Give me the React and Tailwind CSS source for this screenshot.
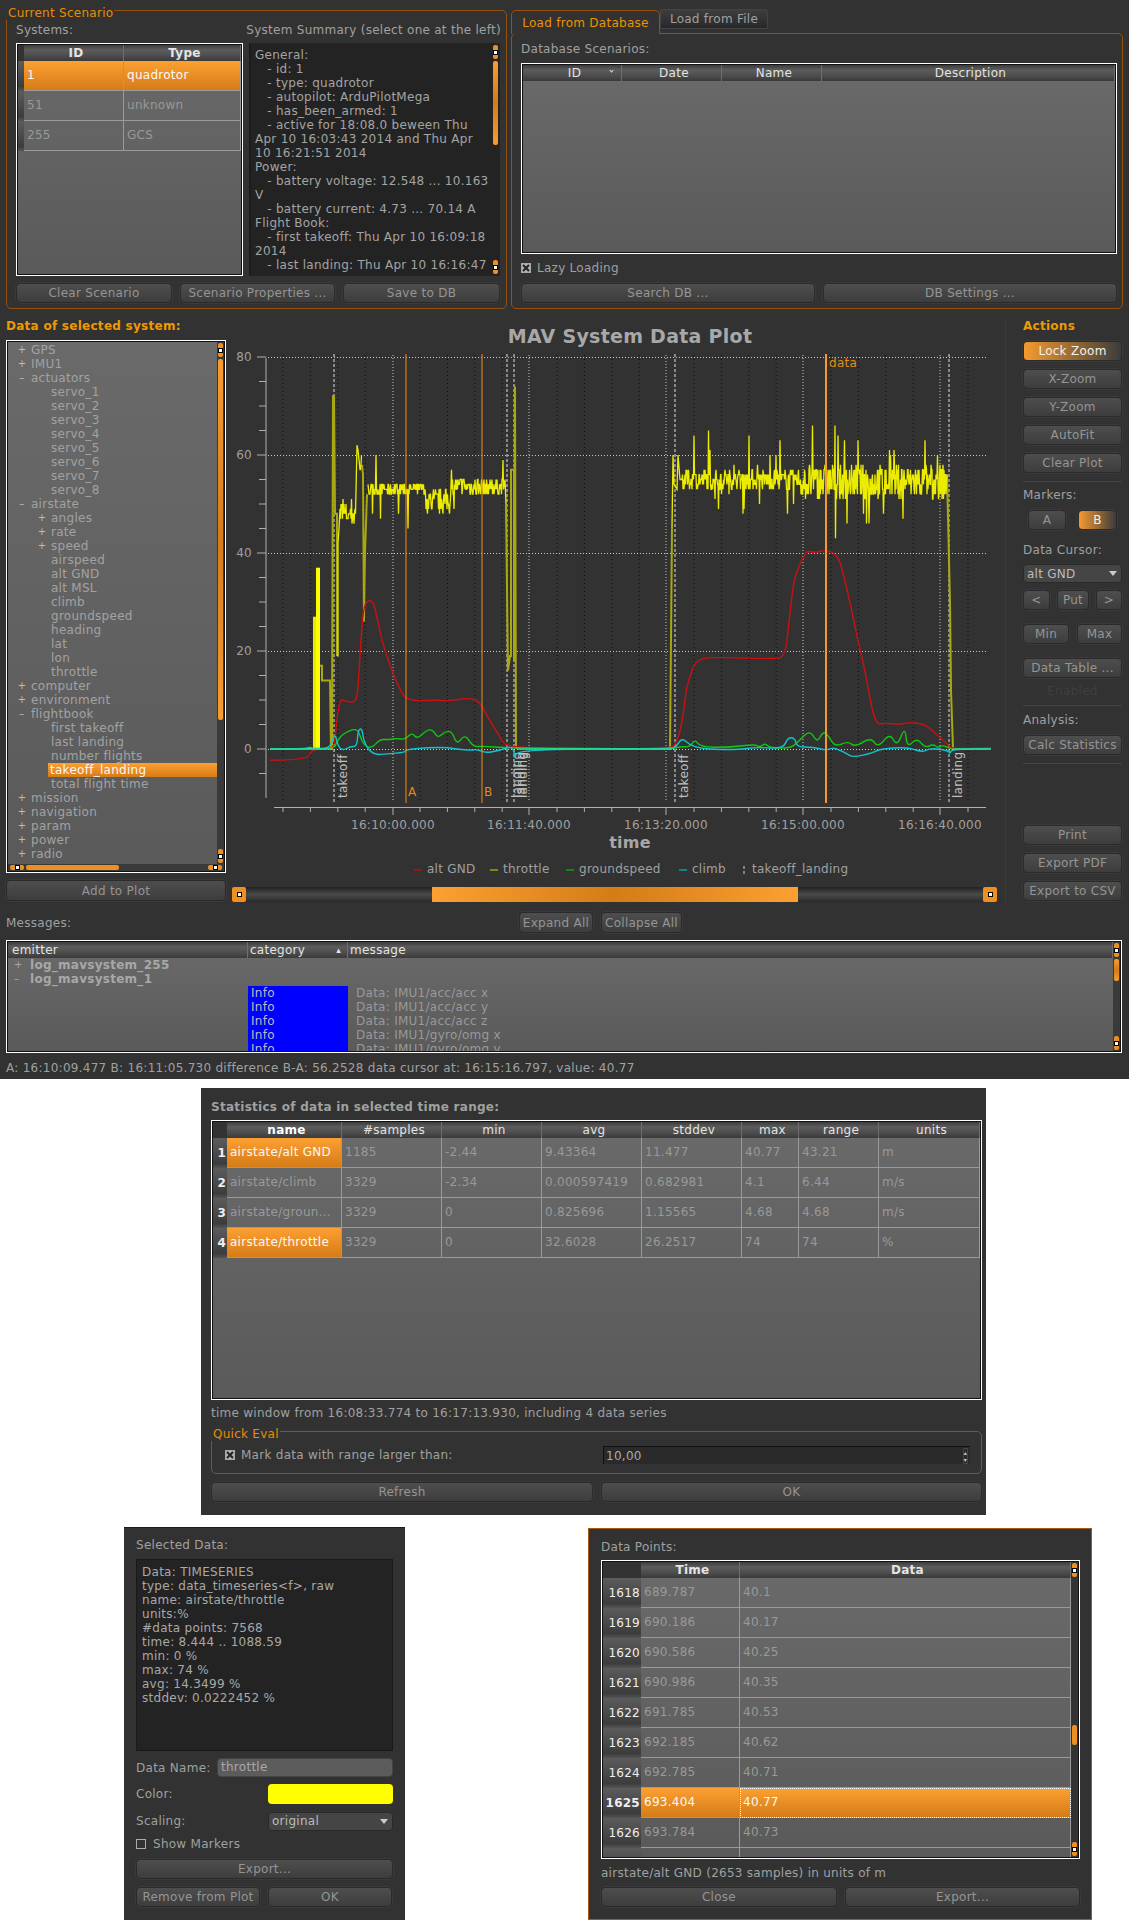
import React from 'react';

let seed = 7;
const rnd = () => {
  seed = (seed * 16807) % 2147483647;
  return seed / 2147483647;
};
const yv = (v) => 749 - 4.9 * v;
const pts = (list) => list.map(([x, v]) => `${x},${yv(v)}`).join(' ');

// rounds the corners of a hand-read curve
function smooth(list) {
  let d = `M${list[0][0]} ${yv(list[0][1])}`;
  for (let i = 1; i < list.length - 1; i++) {
    const [x, v] = list[i];
    const [nx, nv] = list[i + 1];
    d += ` Q${x} ${yv(v)} ${(x + nx) / 2} ${(yv(v) + yv(nv)) / 2}`;
  }
  const last = list[list.length - 1];
  return `${d} L${last[0]} ${yv(last[1])}`;
}

function noisy(x0, x1, base, amp, spikeP, spikeAmp) {
  const out = [];
  for (let x = x0; x < x1; x += 0.5) {
    let v = base + (rnd() - 0.5) * 2 * amp;
    if (rnd() < spikeP) v += (rnd() - 0.5) * 2 * spikeAmp;
    out.push([x, Math.round(v)]);
  }
  return out;
}

const throttleA = [[337, 19], [338, 19], [338, 42], ...noisy(339, 356, 48, 3, 0.1, 5), [357, 62], [358, 61], ...noisy(359, 362, 58, 2, 0, 0)];
const throttleB = [...noisy(368, 425, 53, 1.5, 0.06, 8), ...noisy(425, 452, 50.5, 2.5, 0.05, 8), ...noisy(452, 504, 53.5, 1.8, 0.05, 7), [505, 55], [506, 50]];
const throttleC = [[672, 45], [673, 60], [674, 54], [677, 53], [678, 60], [680, 55], ...noisy(682, 800, 55, 2, 0.07, 9), ...noisy(800, 947, 54.5, 3.5, 0.1, 12), [947, 56]];
const olive1 = [[320, 17], [322, 17], [322, 14], [330, 14], [331, 0], [332, 0], [333, 72], [334, 72], [335, 48], [337, 48], [337, 19]];
const olive2 = [[362, 58], [363, 56], [364, 26], [365, 40], [366, 46], [367, 52]];
const olive3 = [[506, 50], [508, 16], [510, 19], [511, 19], [511, 57], [514, 57], [514, 18], [515, 74], [516, 0]];
const olive4 = [[669, 0], [670, 0], [672, 45]];
const olive5 = [[947, 56], [950, 30], [951, 12], [953, 0]];

const red = [[270, -2.3], [308, -2.3], [311, 0], [333, 0], [335, 2], [338, 8], [341, 10.3], [348, 9.5], [356, 9.7], [358, 12], [362, 26], [365, 30], [373, 30.5], [378, 26], [382, 22], [390, 17], [398, 13], [405, 10.2], [420, 9.8], [435, 10], [450, 9.8], [466, 10.4], [478, 10], [484, 8], [492, 5], [500, 2.5], [507, 0], [670, 0], [676, 1], [682, 5], [686, 12], [690, 15], [697, 18.5], [720, 18.7], [750, 18.5], [770, 18.5], [785, 18.5], [789, 26], [793, 33], [796, 36], [803, 39], [807, 40.5], [815, 40], [827, 40.7], [838, 39.5], [843, 36], [850, 30], [858, 22], [865, 16], [872, 8], [877, 5], [885, 5.3], [900, 5], [907, 5.4], [923, 5.2], [933, 3.7], [948, 0.8], [953, 0], [991, 0.3]];
const green = [[270, 0], [333, 0], [336, 1], [340, 2.5], [346, 3.4], [353, 4], [358, 3.9], [362, 1.5], [367, 0.3], [373, 0.4], [380, 2], [388, 1.9], [397, 2.2], [405, 1.9], [412, 3.4], [417, 2], [427, 3.9], [433, 3.9], [438, 2.2], [445, 3.6], [452, 3.6], [457, 0.8], [465, 3.1], [473, 0.4], [483, 0.6], [507, 0.2], [673, 0], [680, 0.5], [690, 0.4], [695, 2], [700, 0.4], [730, 0.3], [755, 1], [760, 0.3], [765, 1.2], [770, 0.2], [790, 0.2], [797, 1.2], [810, 4], [817, 1.2], [823, 3.6], [828, 2.8], [835, 0.4], [848, 1.6], [855, 0.4], [871, 2.4], [878, 0.2], [890, 3.3], [897, 0.4], [905, 4.7], [907, 0.2], [917, 2.3], [925, 0.2], [933, 1], [938, 0.2], [942, 0.8], [952, 0]];
const cyan = [[270, 0], [305, 0], [310, 0.4], [314, 0], [330, 0], [335, 3.4], [338, 0.5], [343, -0.3], [350, 0.5], [357, 0.5], [358, 3.8], [362, 4.3], [364, 1.2], [373, -1.2], [387, -1], [405, -0.7], [406, -0.1], [430, 0.3], [447, 0.3], [467, -0.3], [478, -0.1], [485, -0.8], [500, -0.3], [513, 0.7], [515, -2.2], [517, 0], [670, 0], [676, 0.4], [682, 2.3], [690, 0.8], [700, 0.2], [713, -0.1], [740, -0.1], [757, 0.4], [783, 0], [788, 2.4], [795, 2.2], [797, 0.4], [813, 0.4], [827, -0.3], [833, 0.4], [847, -1], [853, -1.7], [873, -0.8], [880, 0], [907, 0.4], [923, -0.7], [930, 0.2], [948, -0.3], [950, -1], [952, 0], [991, 0]];

const majorX = [393, 529, 666, 803, 940];
const minorX = Array.from({ length: 26 }, (_, i) => 283 + i * 27.4).filter((x) => !majorX.some((m) => Math.abs(m - x) < 6));
const yTicks = Array.from({ length: 18 }, (_, i) => 80 - i * 5);

function Plot() {
  return (
    <svg viewBox="230 319 775 566" className="block w-[775px] h-[566px]">
      {minorX.map((x) => <line key={x} x1={x} x2={x} y1="355" y2="802" stroke="#0c0c0c" strokeDasharray="1 3" />)}
      {majorX.map((x) => <line key={x} x1={x} x2={x} y1="355" y2="802" stroke="#c8c8c8" strokeDasharray="1 2" />)}
      {[80, 60, 40, 20, 0].map((v) => <line key={v} x1="268" x2="988" y1={yv(v) + 0.5} y2={yv(v) + 0.5} stroke="#c8c8c8" strokeDasharray="1 2" />)}

      <line x1="266" x2="266" y1="358" y2="798" stroke="#b0b0b0" />
      <line x1="274" x2="986" y1="807.5" y2="807.5" stroke="#b0b0b0" />
      {yTicks.map((v) => <line key={v} x1={v % 20 === 0 ? 257 : 259} x2="266" y1={yv(v)} y2={yv(v)} stroke="#b0b0b0" />)}
      {minorX.map((x) => <line key={x} x1={x} x2={x} y1="808" y2="812" stroke="#b0b0b0" />)}
      {majorX.map((x) => <line key={x} x1={x} x2={x} y1="808" y2="815" stroke="#b0b0b0" />)}

      <text x="630" y="343" textAnchor="middle" fontSize="19" fontWeight="bold" fill="#a8a8a8">MAV System Data Plot</text>
      {[80, 60, 40, 20, 0].map((v) => <text key={v} x="252" y={yv(v) + 4} textAnchor="end" fontSize="12" fill="#a0a0a0">{v}</text>)}
      {[['16:10:00.000', 393], ['16:11:40.000', 529], ['16:13:20.000', 666], ['16:15:00.000', 803], ['16:16:40.000', 940]].map(([t, x]) => (
        <text key={t} x={x} y="829" textAnchor="middle" fontSize="12" fill="#a0a0a0">{t}</text>
      ))}
      <text x="630" y="848" textAnchor="middle" fontSize="16" fontWeight="bold" fill="#a8a8a8">time</text>

      {[334, 507, 514, 675, 949].map((x) => <line key={x} x1={x} x2={x} y1="354" y2="803" stroke="#e0e0e0" strokeDasharray="3 2" />)}
      {[['takeoff', 347], ['landing', 521], ['landing', 525], ['landing', 527], ['takeoff', 688], ['landing', 962]].map(([t, x], i) => (
        <text key={i} x={x} y="798" fontSize="12" fill="#c0c0c0" transform={`rotate(-90 ${x} 798)`}>{t}</text>
      ))}

      <rect x="313" y={yv(27)} width="3" height={4.9 * 27} fill="#e8e800" />
      <rect x="316" y={yv(37)} width="4" height={4.9 * 37} fill="#ffff00" />
      <polyline points={pts(olive1)} fill="none" stroke="#a8a812" strokeWidth="2" />
      <polyline points={pts(olive2)} fill="none" stroke="#a8a812" strokeWidth="2" />
      <polyline points={pts(olive3)} fill="none" stroke="#a8a812" strokeWidth="2" />
      <polyline points={pts(olive4)} fill="none" stroke="#a8a812" strokeWidth="2" />
      <polyline points={pts(olive5)} fill="none" stroke="#a8a812" strokeWidth="2" />
      <polyline points={pts(throttleA)} fill="none" stroke="#ecec00" strokeWidth="1.3" />
      <polyline points={pts(throttleB)} fill="none" stroke="#ecec00" strokeWidth="1.3" />
      <polyline points={pts(throttleC)} fill="none" stroke="#ecec00" strokeWidth="1.3" />
      <path d={smooth(red)} fill="none" stroke="#cc1010" strokeWidth="1.4" />
      <path d={smooth(green)} fill="none" stroke="#10c810" strokeWidth="1.4" />
      <path d={smooth(cyan)} fill="none" stroke="#10c4d0" strokeWidth="1.4" />
      <line x1="270" x2="332" y1="749" y2="749" stroke="#20e090" strokeWidth="1.6" />
      <line x1="517" x2="672" y1="749" y2="749" stroke="#20e090" strokeWidth="1.6" />
      <line x1="953" x2="991" y1="749" y2="749" stroke="#20e090" strokeWidth="1.6" />

      <line x1="406" x2="406" y1="354" y2="803" stroke="#f08c10" />
      <line x1="482" x2="482" y1="354" y2="803" stroke="#f08c10" />
      <line x1="826" x2="826" y1="354" y2="803" stroke="#f59a30" strokeWidth="2" />
      <text x="408" y="796" fontSize="12" fill="#e88a10">A</text>
      <text x="484" y="796" fontSize="12" fill="#e88a10">B</text>
      <text x="829" y="367" fontSize="12" fill="#e88a10">data</text>

      {[['alt GND', 414, '#b01010'], ['throttle', 490, '#a0a010'], ['groundspeed', 566, '#10a010'], ['climb', 679, '#10a0a8']].map(([t, x, c]) => (
        <g key={t}>
          <line x1={x} x2={x + 8} y1="870" y2="870" stroke={c} strokeWidth="1.5" />
          <text x={x + 13} y="873" fontSize="12" fill="#a0a0a0">{t}</text>
        </g>
      ))}
      <line x1="744" x2="744" y1="866" y2="874" stroke="#d0d0d0" strokeDasharray="3 2" />
      <text x="752" y="873" fontSize="12" fill="#a0a0a0">takeoff_landing</text>
    </svg>
  );
}

function Btn({ children, className = '', active }) {
  return (
    <div className={`flex items-center justify-center h-[20px] rounded-[4px] border border-[#2a2a2a] shadow-[0_0_0_1px_#3a3a3a] whitespace-nowrap ${active ? 'bg-[linear-gradient(90deg,#f59a2e,#3c3c3c)] text-[#f2f2f2]' : 'bg-linear-to-b from-[#4e4e4e] to-[#3d3d3d] text-[#959595]'} ${className}`}>
      {children}
    </div>
  );
}

function Handle({ className = '' }) {
  return (
    <div className={`flex items-center justify-center shrink-0 bg-[#ee8f22] rounded-[2px] ${className}`}>
      <div className="w-[3px] h-[3px] bg-white border border-black box-content" />
    </div>
  );
}

function VScroll({ barClass, spacerClass }) {
  return (
    <div className="w-[7px] shrink-0 flex flex-col items-center bg-[#3a3a3a] py-px">
      <Handle className="w-[5px] h-[14px]" />
      <div className={`w-full flex-1 flex flex-col items-center ${spacerClass || ''}`}>
        <div className={`w-[5px] rounded-[2px] bg-linear-to-b from-[#f89c30] via-[#d57c16] to-[#f89c30] ${barClass}`} />
      </div>
      <Handle className="w-[5px] h-[14px]" />
    </div>
  );
}

function Frame({ children, className = '' }) {
  return (
    <div className={`border border-white ${className}`}>
      <div className="w-full h-full border border-[#111] bg-linear-to-b from-[#6a6a6a] to-[#5a5a5a] overflow-hidden">{children}</div>
    </div>
  );
}

const headBase = 'flex items-center h-[16px] border-r border-[#6e6e6e] bg-[linear-gradient(#3c3c3c,#5c5c5c_30%,#4e4e4e_65%,#3a3a3a)] text-[#e4e4e4]';
const headCell = `${headBase} justify-center pl-[5px]`;
const cell = 'flex items-center pl-[3px] pb-[2px] h-[30px] border-r border-b border-[#9a9a9a] text-[#999] whitespace-nowrap overflow-hidden';
const sel = 'bg-linear-to-b from-[#fca032] to-[#d67c16] text-[#f8f8f8]';
const rowHead = 'flex items-center justify-end h-[30px] bg-[linear-gradient(#5c5c5c,#3c3c3c_85%,#555)] text-[#eee]';

function Group({ title, className = '', children }) {
  return (
    <div className={`relative border border-[#93520c] rounded-[5px] ${className}`}>
      {title && <div className="absolute -left-px -top-[5px] h-[14px] leading-[14px] pl-[2px] pr-[1px] bg-[#323232] text-[#e88c00]">{title}</div>}
      {children}
    </div>
  );
}

function Check({ on }) {
  return (
    <svg width="10" height="10" viewBox="0 0 10 10" className="shrink-0">
      <rect x="0.5" y="0.5" width="9" height="9" fill={on ? '#b0b0b0' : 'none'} stroke="#aaa" />
      {on && <path d="M2 2 L8 8 M8 2 L2 8" stroke="#222" strokeWidth="2" />}
    </svg>
  );
}

function Caret() {
  return <svg width="8" height="5" viewBox="0 0 8 5" className="shrink-0"><path d="M0 0 H8 L4 5 Z" fill="#ccc" /></svg>;
}

const summary = [
  'General:', '   - id: 1', '   - type: quadrotor', '   - autopilot: ArduPilotMega', '   - has_been_armed: 1',
  '   - active for 18:08.0 beween Thu', 'Apr 10 16:03:43 2014 and Thu Apr', '10 16:21:51 2014', 'Power:',
  '   - battery voltage: 12.548 ... 10.163', 'V', '   - battery current: 4.73 ... 70.14 A', 'Flight Book:',
  '   - first takeoff: Thu Apr 10 16:09:18', '2014', '   - last landing: Thu Apr 10 16:16:47',
];

const tree = [
  ['GPS', 0, '+'], ['IMU1', 0, '+'], ['actuators', 0, '-'],
  ['servo_1', 1], ['servo_2', 1], ['servo_3', 1], ['servo_4', 1], ['servo_5', 1], ['servo_6', 1], ['servo_7', 1], ['servo_8', 1],
  ['airstate', 0, '-'], ['angles', 1, '+'], ['rate', 1, '+'], ['speed', 1, '+'],
  ['airspeed', 1], ['alt GND', 1], ['alt MSL', 1], ['climb', 1], ['groundspeed', 1], ['heading', 1], ['lat', 1], ['lon', 1], ['throttle', 1],
  ['computer', 0, '+'], ['environment', 0, '+'], ['flightbook', 0, '-'],
  ['first takeoff', 1], ['last landing', 1], ['number flights', 1], ['takeoff_landing', 1], ['total flight time', 1],
  ['mission', 0, '+'], ['navigation', 0, '+'], ['param', 0, '+'], ['power', 0, '+'], ['radio', 0, '+'], ['rc', 0, '+'],
];

function TreeRow({ label, depth, mark }) {
  const selected = label === 'takeoff_landing';
  return (
    <div className="flex items-center h-[14px] shrink-0 text-[#a2a2a2]">
      <div className={depth ? 'w-[30px] shrink-0' : 'w-[10px] shrink-0'} />
      <div className="w-[8px] h-[14px] shrink-0 flex items-center justify-center text-[10px] text-[#bbb]">{mark === '-' ? '–' : mark}</div>
      <div className={`flex-1 h-[14px] leading-[14px] whitespace-nowrap ${selected ? `ml-[2px] pl-[2px] ${sel}` : 'ml-[5px]'}`}>{label}</div>
    </div>
  );
}

const statRows = [
  ['1', 'airstate/alt GND', '1185', '-2.44', '9.43364', '11.477', '40.77', '43.21', 'm'],
  ['2', 'airstate/climb', '3329', '-2.34', '0.000597419', '0.682981', '4.1', '6.44', 'm/s'],
  ['3', 'airstate/groun...', '3329', '0', '0.825696', '1.15565', '4.68', '4.68', 'm/s'],
  ['4', 'airstate/throttle', '3329', '0', '32.6028', '26.2517', '74', '74', '%'],
];

const points = [
  ['1618', '689.787', '40.1'], ['1619', '690.186', '40.17'], ['1620', '690.586', '40.25'], ['1621', '690.986', '40.35'],
  ['1622', '691.785', '40.53'], ['1623', '692.185', '40.62'], ['1624', '692.785', '40.71'], ['1625', '693.404', '40.77'],
  ['1626', '693.784', '40.73'], ['1627', '694.383', '40.81'],
];

const selectedLines = ['Data: TIMESERIES', 'type: data_timeseries<f>, raw', 'name: airstate/throttle', 'units:%', '#data points: 7568', 'time: 8.444 .. 1088.59', 'min: 0 %', 'max: 74 %', 'avg: 14.3499 %', 'stddev: 0.0222452 %'];

function TopRow() {
  return (
    <div className="flex pl-[6px] h-[309px]">
      <Group title="Current Scenario" className="mt-[10px] w-[501px] h-[299px] pl-[9px] pr-[5px] pt-[12px]">
        <div className="flex h-[14px] leading-[14px] text-[#a0a0a0] whitespace-nowrap">
          <div className="w-[233px]">Systems:</div>
          <div>System Summary (select one at the left)</div>
        </div>
        <div className="flex mt-[6px] gap-[6px] h-[233px]">
          <Frame className="w-[227px]">
            <div className="grid grid-cols-[6px_100px_117px]">
              <div className="bg-[#333] h-[16px]" />
              <div className={`${headCell} font-bold`}>ID</div>
              <div className={`${headCell} font-bold`}>Type</div>
              {[['1', 'quadrotor'], ['51', 'unknown'], ['255', 'GCS']].map(([id, t], i) => (
                <React.Fragment key={id}>
                  <div className={rowHead} />
                  <div className={`${cell} ${i === 0 ? sel : ''}`}>{id}</div>
                  <div className={`${cell} ${i === 0 ? sel : ''}`}>{t}</div>
                </React.Fragment>
              ))}
            </div>
          </Frame>
          <div className="w-[251px] flex bg-[#232323] border-l-2 border-[#1c1c1c]">
            <div className="flex-1 pl-[4px] pt-[5px] leading-[14px] text-[#a4a4a4] whitespace-pre overflow-hidden">
              {summary.map((l, i) => <div key={i}>{l}</div>)}
            </div>
            <div className="w-[9px] shrink-0 flex flex-col items-center pt-[2px] pb-[2px]">
              <Handle className="w-[5px] h-[14px]" />
              <div className="flex-1 w-full flex flex-col items-center pt-[2px]">
                <div className="w-[5px] h-[84px] rounded-[2px] bg-linear-to-b from-[#f89c30] via-[#d57c16] to-[#f89c30]" />
              </div>
              <Handle className="w-[5px] h-[14px]" />
            </div>
          </div>
        </div>
        <div className="flex gap-[8px] mt-[7px]">
          <Btn className="w-[156px]">Clear Scenario</Btn>
          <Btn className="w-[155px]">Scenario Properties ...</Btn>
          <Btn className="w-[157px]">Save to DB</Btn>
        </div>
      </Group>

      <div className="ml-[4px] w-[612px] flex flex-col">
        <div className="flex items-end h-[33px] pt-[6px]">
          <div className="w-[149px] h-[24px] mb-[-1px] rounded-t-[5px] border border-b-0 border-[#93520c] text-[#ee9000] flex items-center justify-center z-10 bg-[#323232]">Load from Database</div>
          <div className="w-[108px] h-[20px] mb-[4px] border border-[#444] rounded-tr-[3px] bg-linear-to-b from-[#3e3e3e] to-[#282828] text-[#a0a0a0] flex items-center justify-center">Load from File</div>
        </div>
        <Group className="h-[276px] pl-[9px] pr-[5px] pt-[8px]">
          <div className="h-[14px] leading-[14px] text-[#a0a0a0]">Database Scenarios:</div>
          <Frame className="mt-[7px] h-[191px] w-[596px]">
            <div className="grid grid-cols-[99px_100px_100px_293px]">
              <div className={`${headCell} relative text-[#e4e4e4]`}>ID<span className="absolute right-[8px] top-[4px] w-[3px] h-[3px] border-b border-r border-[#ddd] rotate-45" /></div>
              <div className={headCell}>Date</div>
              <div className={headCell}>Name</div>
              <div className={headCell}>Description</div>
            </div>
          </Frame>
          <div className="flex items-center gap-[6px] mt-[7px] h-[14px] text-[#a0a0a0]"><Check on />Lazy Loading</div>
          <div className="flex gap-[8px] mt-[8px]">
            <Btn className="w-[294px]">Search DB ...</Btn>
            <Btn className="w-[294px]">DB Settings ...</Btn>
          </div>
        </Group>
      </div>
    </div>
  );
}

function MiddleRow() {
  return (
    <div className="flex pl-[6px] mt-[10px] h-[583px]">
      <div className="w-[220px] shrink-0 flex flex-col">
        <div className="h-[14px] leading-[14px] font-bold text-[#ee9a00]">Data of selected system:</div>
        <div className="mt-[7px] h-[533px] border border-white">
          <div className="w-full h-full border border-[#111] bg-linear-to-b from-[#6a6a6a] to-[#5a5a5a] flex flex-col">
            <div className="flex flex-1 min-h-0">
              <div className="flex-1 min-w-0 flex flex-col overflow-hidden pt-px">
                {tree.map(([l, d, m]) => <TreeRow key={l} label={l} depth={d} mark={m} />)}
              </div>
              <VScroll barClass="h-[361px] mt-[2px]" />
            </div>
            <div className="h-[7px] shrink-0 bg-[#3a3a3a] flex items-center px-[2px]">
              <Handle className="w-[14px] h-[5px]" />
              <div className="flex-1 px-[2px]"><div className="h-[5px] w-[93px] rounded-[2px] bg-[#ee8f22]" /></div>
              <Handle className="w-[14px] h-[5px]" />
            </div>
          </div>
        </div>
        <Btn className="mt-[7px] w-[220px] h-[21px]">Add to Plot</Btn>
      </div>

      <div className="ml-[4px] w-[775px] shrink-0 flex flex-col">
        <Plot />
        <div className="flex ml-[2px] w-[765px] h-[15px] mt-[2px]">
          <Handle className="w-[14px] h-[15px]" />
          <div className="flex-1 flex bg-[linear-gradient(#222,#4a4a4a_50%,#2a2a2a)]">
            <div className="w-[186px]" />
            <div className="w-[366px] bg-[linear-gradient(90deg,#fca032,#d57c16_50%,#fca032)]" />
          </div>
          <Handle className="w-[14px] h-[15px]" />
        </div>
      </div>

      <div className="w-[117px] shrink-0 border-l border-[#3c3c3c] pl-[17px] flex flex-col">
        <div className="h-[14px] leading-[14px] font-bold text-[#ee9a00]">Actions</div>
        <Btn active className="mt-[8px]">Lock Zoom</Btn>
        <Btn className="mt-[8px]">X-Zoom</Btn>
        <Btn className="mt-[8px]">Y-Zoom</Btn>
        <Btn className="mt-[8px]">AutoFit</Btn>
        <Btn className="mt-[8px]">Clear Plot</Btn>
        <div className="mt-[8px] h-px bg-[#444]" />
        <div className="mt-[6px] h-[14px] leading-[14px] text-[#a0a0a0]">Markers:</div>
        <div className="flex mt-[8px] pl-[5px] gap-[12px]">
          <Btn className="w-[38px]">A</Btn>
          <Btn active className="w-[39px]">B</Btn>
        </div>
        <div className="mt-[13px] h-[14px] leading-[14px] text-[#a0a0a0]">Data Cursor:</div>
        <div className="mt-[7px] h-[19px] rounded-[4px] border border-[#2a2a2a] bg-[#454545] text-[#bbb] flex items-center justify-between pl-[3px] pr-[4px]">alt GND<Caret /></div>
        <div className="flex mt-[7px] justify-between">
          <Btn className="w-[27px]">&lt;</Btn>
          <Btn className="w-[32px]">Put</Btn>
          <Btn className="w-[26px]">&gt;</Btn>
        </div>
        <div className="flex mt-[14px] justify-between">
          <Btn className="w-[46px]">Min</Btn>
          <Btn className="w-[45px]">Max</Btn>
        </div>
        <Btn className="mt-[14px]">Data Table ...</Btn>
        <div className="mt-[6px] h-[14px] leading-[14px] text-center text-[#3f3f3f]">Enabled</div>
        <div className="mt-[7px] h-px bg-[#444]" />
        <div className="mt-[7px] h-[14px] leading-[14px] text-[#a0a0a0]">Analysis:</div>
        <Btn className="mt-[8px]">Calc Statistics</Btn>
        <div className="mt-[8px] h-px bg-[#444]" />
        <Btn className="mt-[61px]">Print</Btn>
        <Btn className="mt-[8px]">Export PDF</Btn>
        <Btn className="mt-[8px]">Export to CSV</Btn>
      </div>
    </div>
  );
}

function MessagesPane() {
  return (
    <div className="pl-[6px] pr-[7px] mt-[10px]">
      <div className="flex items-center h-[21px]">
        <div className="w-[513px] text-[#a0a0a0]">Messages:</div>
        <Btn className="w-[74px] h-[21px]">Expand All</Btn>
        <Btn className="w-[81px] h-[21px] ml-[8px]">Collapse All</Btn>
      </div>
      <Frame className="mt-[7px] h-[113px]">
        <div className="flex h-full">
          <div className="flex-1 min-w-0">
            <div className="grid grid-cols-[240px_100px_1fr]">
              <div className={`${headBase} pl-[4px]`}>emitter</div>
              <div className={`${headBase} justify-between pl-[2px] pr-[6px]`}>category<span className="text-[9px]">▴</span></div>
              <div className={`${headBase} pl-[2px]`}>message</div>
            </div>
            <div className="flex items-center h-[14px] pl-[6px] text-[#a8a8a8]"><span className="w-[16px] text-[10px]">+</span><span className="font-bold">log_mavsystem_255</span></div>
            <div className="flex items-center h-[14px] pl-[6px] text-[#a8a8a8]"><span className="w-[16px] text-[10px]">–</span><span className="font-bold">log_mavsystem_1</span></div>
            {['x', 'y', 'z'].map((a) => (
              <div key={a} className="grid grid-cols-[240px_100px_1fr] h-[14px] leading-[14px]">
                <div />
                <div className="bg-[#0000ff] pl-[3px] text-[#bbb]">Info</div>
                <div className="pl-[8px] text-[#999]">Data: IMU1/acc/acc {a}</div>
              </div>
            ))}
            {['x', 'y'].map((a) => (
              <div key={a} className="grid grid-cols-[240px_100px_1fr] h-[14px] leading-[14px]">
                <div />
                <div className="bg-[#0000ff] pl-[3px] text-[#bbb]">Info</div>
                <div className="pl-[8px] text-[#999]">Data: IMU1/gyro/omg {a}</div>
              </div>
            ))}
          </div>
          <VScroll barClass="h-[22px] mt-[2px]" />
        </div>
      </Frame>
      <div className="mt-[8px] h-[14px] leading-[14px] text-[#a0a0a0] whitespace-nowrap">A: 16:10:09.477 B: 16:11:05.730 difference B-A: 56.2528 data cursor at: 16:15:16.797, value: 40.77</div>
    </div>
  );
}

function StatsDialog() {
  return (
    <div className="ml-[201px] mt-[9px] w-[785px] h-[427px] bg-[#323232] pl-[10px] pr-[4px] pt-[12px]">
      <div className="h-[14px] leading-[14px] font-bold text-[#a0a0a0]">Statistics of data in selected time range:</div>
      <Frame className="mt-[6px] h-[280px] w-[771px]">
        <div className="grid grid-cols-[14px_115px_100px_100px_100px_100px_57px_80px_101px]">
          <div className="bg-[#333] h-[16px]" />
          {['name', '#samples', 'min', 'avg', 'stddev', 'max', 'range', 'units'].map((h, i) => (
            <div key={h} className={`${headCell} ${i === 0 ? 'font-bold text-white' : ''}`}>{h}</div>
          ))}
          {statRows.map((r, ri) => r.map((v, i) => {
            if (i === 0) return <div key={i} className={`${rowHead} font-bold pr-px`}>{v}</div>;
            const on = i === 1 && (ri === 0 || ri === 3);
            return <div key={i} className={`${cell} ${on ? sel : ''}`}>{v}</div>;
          }))}
        </div>
      </Frame>
      <div className="mt-[6px] h-[14px] leading-[14px] text-[#a0a0a0]">time window from 16:08:33.774 to 16:17:13.930, including 4 data series</div>
      <Group title="Quick Eval" className="mt-[11px] h-[43px] w-[771px] pl-[13px] pr-[11px] pt-[14px]">
        <div className="flex items-center">
          <div className="w-[378px] flex items-center gap-[6px] h-[18px] text-[#a0a0a0]"><Check on />Mark data with range larger than:</div>
          <div className="flex-1 h-[18px] bg-[#2a2a2a] border-t border-l border-[#111] flex items-center justify-between pl-[2px] pr-[2px] text-[#aaa]">
            10,00
            <span className="flex flex-col text-[6px] leading-[7px] text-[#ccc] border border-[#444]"><span>▴</span><span>▾</span></span>
          </div>
        </div>
      </Group>
      <div className="flex gap-[8px] mt-[8px]">
        <Btn className="w-[382px]">Refresh</Btn>
        <Btn className="w-[381px]">OK</Btn>
      </div>
    </div>
  );
}

function SelectedDialog() {
  return (
    <div className="ml-[124px] w-[281px] h-[393px] bg-[#323232] border-t border-[#1c1c1c] px-[12px] pt-[10px] shrink-0">
      <div className="h-[14px] leading-[14px] text-[#a0a0a0]">Selected Data:</div>
      <div className="mt-[7px] h-[192px] bg-[#232323] border border-[#1a1a1a] pl-[5px] pt-[5px] leading-[14px] text-[#a8a8a8]">
        {selectedLines.map((l) => <div key={l}>{l}</div>)}
      </div>
      <div className="flex items-center mt-[7px] h-[19px]">
        <div className="w-[81px] text-[#a0a0a0]">Data Name:</div>
        <div className="flex-1 h-[19px] rounded-[4px] bg-[#5c5c5c] border border-[#444] text-[#a8a8a8] pl-[3px] leading-[17px]">throttle</div>
      </div>
      <div className="flex items-center mt-[7px] h-[20px]">
        <div className="w-[132px] text-[#a0a0a0]">Color:</div>
        <div className="flex-1 h-[20px] rounded-[4px] bg-[#ffff00]" />
      </div>
      <div className="flex items-center mt-[8px] h-[18px]">
        <div className="w-[132px] text-[#a0a0a0]">Scaling:</div>
        <div className="flex-1 h-[19px] rounded-[4px] border border-[#2a2a2a] bg-[#454545] text-[#bbb] flex items-center justify-between pl-[3px] pr-[4px]">original<Caret /></div>
      </div>
      <div className="flex items-center gap-[7px] mt-[7px] h-[14px] text-[#a0a0a0]"><Check />Show Markers</div>
      <Btn className="mt-[8px]">Export...</Btn>
      <div className="flex gap-[8px] mt-[8px]">
        <Btn className="w-[124px]">Remove from Plot</Btn>
        <Btn className="w-[124px]">OK</Btn>
      </div>
    </div>
  );
}

function PointsDialog() {
  return (
    <div className="ml-[183px] mt-px w-[504px] h-[392px] bg-[#323232] border border-[#a85a10] pl-[12px] pr-[10px] pt-[11px] shrink-0">
      <div className="h-[14px] leading-[14px] text-[#a0a0a0]">Data Points:</div>
      <Frame className="mt-[6px] h-[299px] w-[479px]">
        <div className="flex h-full">
          <div className="flex-1 min-w-0 overflow-hidden">
            <div className="grid grid-cols-[38px_99px_331px]">
              <div className="bg-[#333] h-[16px]" />
              <div className={`${headCell} font-bold`}>Time</div>
              <div className={`${headCell} font-bold`}>Data</div>
              {points.map(([n, t, v]) => {
                const on = n === '1625';
                return (
                  <React.Fragment key={n}>
                    <div className={`${rowHead} pr-px ${on ? 'font-bold' : ''}`}>{n}</div>
                    <div className={`${cell} ${on ? sel : ''}`}>{t}</div>
                    <div className={`${cell} ${on ? `${sel} outline-1 outline-dotted -outline-offset-1 outline-white` : ''}`}>{v}</div>
                  </React.Fragment>
                );
              })}
            </div>
          </div>
          <div className="w-[7px] shrink-0 flex flex-col items-center bg-[#333] py-px">
            <Handle className="w-[5px] h-[14px]" />
            <div className="flex-1 w-full flex flex-col items-center pt-[148px]">
              <div className="w-[5px] h-[20px] rounded-[2px] bg-[#ee8f22]" />
            </div>
            <Handle className="w-[5px] h-[14px]" />
          </div>
        </div>
      </Frame>
      <div className="mt-[7px] h-[14px] leading-[14px] text-[#a0a0a0]">airstate/alt GND (2653 samples) in units of m</div>
      <div className="flex gap-[8px] mt-[7px]">
        <Btn className="w-[236px]">Close</Btn>
        <Btn className="w-[235px]">Export...</Btn>
      </div>
    </div>
  );
}

export default function App() {
  return (
    <div className="w-[1129px] h-[1921px] bg-white overflow-hidden font-['DejaVu_Sans',sans-serif] text-[12px] leading-[14px] tracking-[0.27px]">
      <div className="h-[1079px] bg-[#323232]">
        <TopRow />
        <MiddleRow />
        <MessagesPane />
      </div>
      <StatsDialog />
      <div className="flex mt-[12px]">
        <SelectedDialog />
        <PointsDialog />
      </div>
    </div>
  );
}
